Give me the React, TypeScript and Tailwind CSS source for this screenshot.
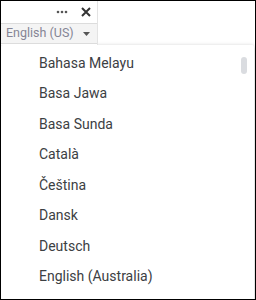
import React from 'react';

const languages = [
  'Bahasa Melayu',
  'Basa Jawa',
  'Basa Sunda',
  'Català',
  'Čeština',
  'Dansk',
  'Deutsch',
  'English (Australia)',
];

export default function App() {
  return (
    <div className="relative w-[256px] h-[300px] overflow-hidden border border-black bg-white font-['Roboto',sans-serif]">
      {/* toolbar widget */}
      <div className="absolute left-0 top-[-1px] z-20 w-[97px] h-[45px] bg-white border-r border-[#e3e3e3] flex flex-col">
        <div className="h-[23px] flex items-center justify-end gap-[13px] pr-[6px]">
          <svg width="12" height="4" viewBox="0 0 12 4">
            <circle cx="2" cy="2" r="1.3" fill="#555" />
            <circle cx="6" cy="2" r="1.3" fill="#555" />
            <circle cx="10" cy="2" r="1.3" fill="#555" />
          </svg>
          <svg width="10" height="10" viewBox="0 0 10 10">
            <path d="M1 1L9 9M9 1L1 9" stroke="#333" strokeWidth="2" />
          </svg>
        </div>
        <div className="h-[21px] flex items-center justify-between bg-[#f4f4f4] border-y border-[#dcdcdc] pl-[5px] pr-[7px] text-[12.5px] text-[#858595]">
          <span>English (US)</span>
          <svg width="7" height="4" viewBox="0 0 7 4">
            <path d="M0 0H7L3.5 4Z" fill="#555" />
          </svg>
        </div>
      </div>

      {/* dropdown menu */}
      <div className="absolute left-0 top-[44px] z-10 w-[253px] h-[300px] bg-white rounded-[2px] shadow-[0_1px_4px_rgba(0,0,0,0.25)] pt-[3px]">
        <div className="absolute right-[7px] top-[12px] w-[6px] h-[17px] rounded-full bg-[#dadce0]" />
        {languages.map((l) => (
          <div key={l} className="h-[30.5px] flex items-center pl-[38px] text-[14px] text-[#3c4043]">
            {l}
          </div>
        ))}
      </div>
    </div>
  );
}
